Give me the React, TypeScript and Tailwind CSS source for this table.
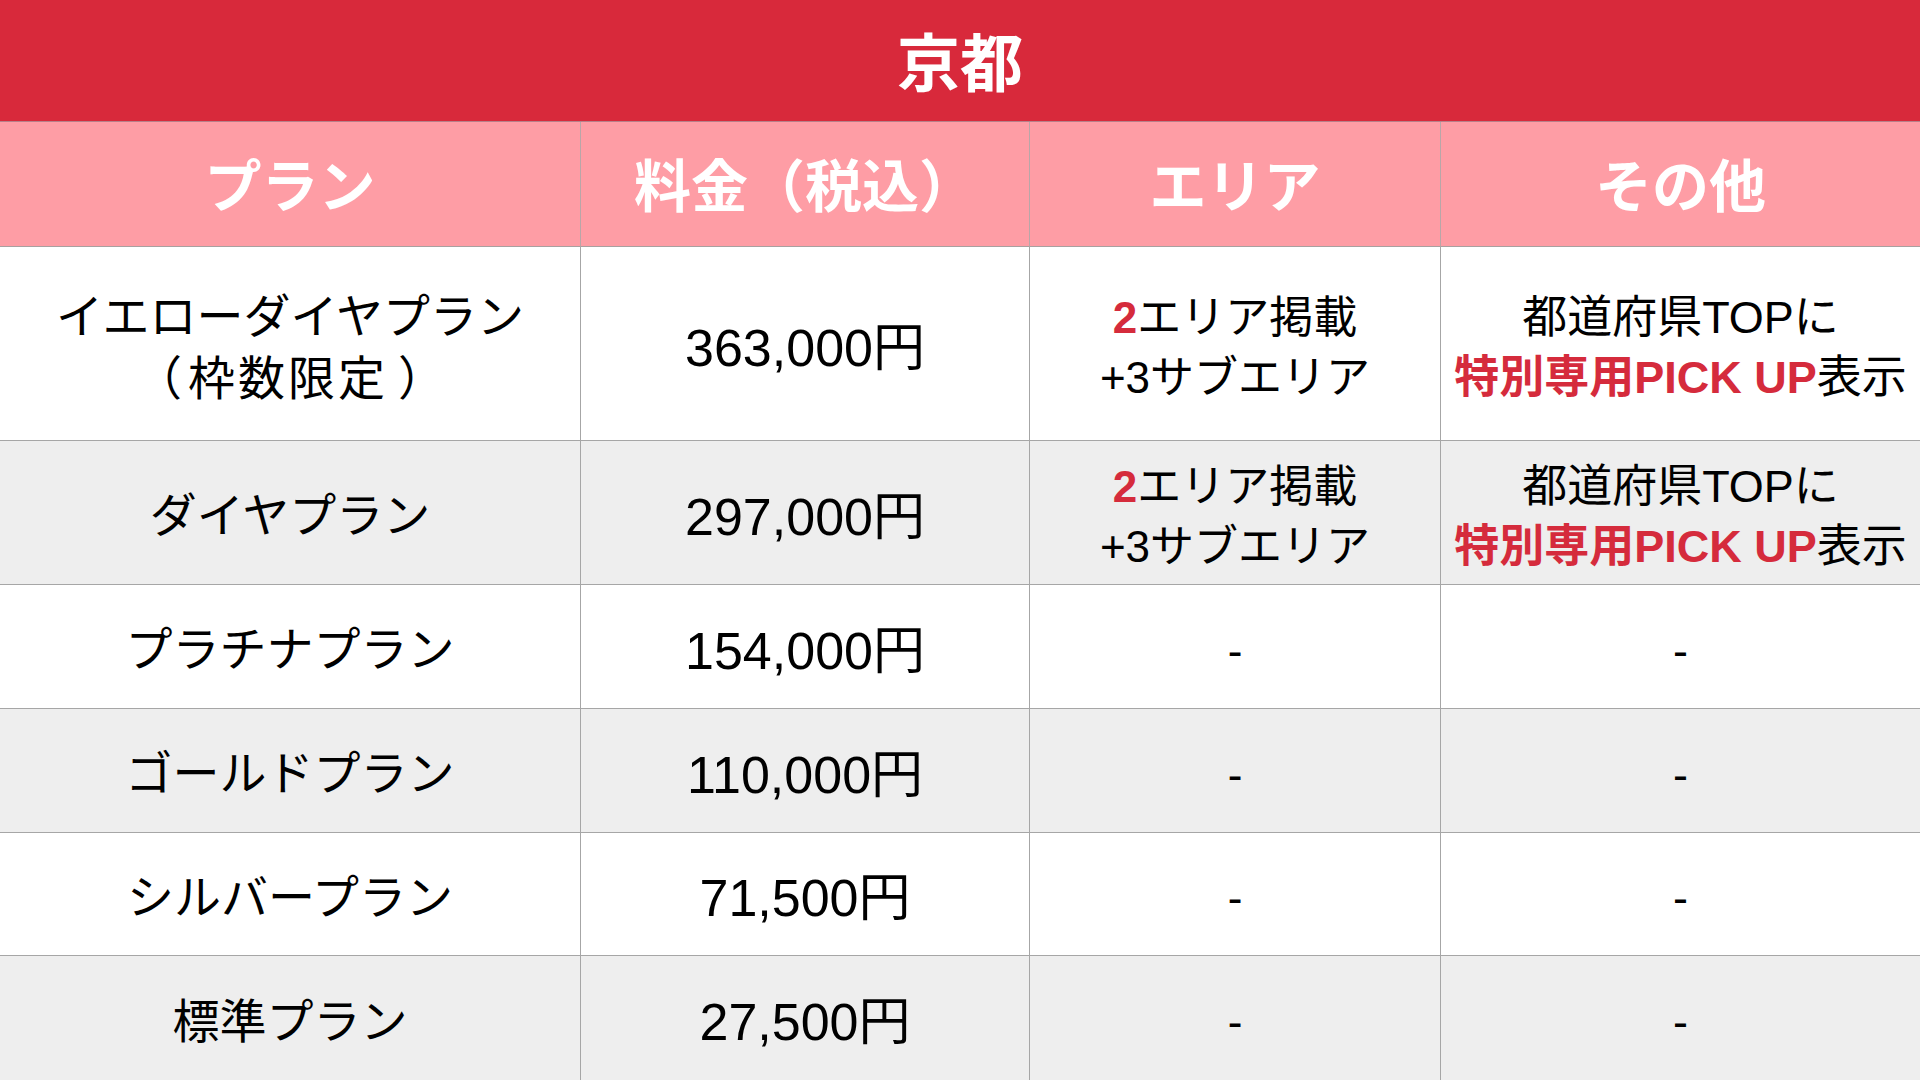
import React from "react";

type Row = {
  plan: React.ReactNode;
  price: string;
  area: React.ReactNode;
  other: React.ReactNode;
  h: string;
  bg: string;
};

const font = "font-['Liberation_Sans','Noto_Sans_CJK_JP',sans-serif]";

const AreaText = () => (
  <div className="leading-[60px]">
    <div>
      <span className="font-bold text-[#d52b3c]">2</span>エリア掲載
    </div>
    <div>+3サブエリア</div>
  </div>
);

const OtherText = () => (
  <div className="leading-[60px]">
    <div>都道府県TOPに</div>
    <div>
      <span className="font-bold text-[#d52b3c]">特別専用PICK UP</span>表示
    </div>
  </div>
);

const rows: Row[] = [
  {
    plan: (
      <div className="leading-[62px]">
        <div>イエローダイヤプラン</div>
        <div>
          <span className="inline-block w-[1em] mr-[6px] text-right">（</span>
          <span className="tracking-[3px]">枠数限定</span>
          <span className="inline-block w-[1em] ml-[10px] text-left">）</span>
        </div>
      </div>
    ),
    price: "363,000円",
    area: <AreaText />,
    other: <OtherText />,
    h: "h-[194px]",
    bg: "bg-white",
  },
  {
    plan: "ダイヤプラン",
    price: "297,000円",
    area: <AreaText />,
    other: <OtherText />,
    h: "h-[144px]",
    bg: "bg-[#eeeeee]",
  },
  { plan: "プラチナプラン", price: "154,000円", area: "-", other: "-", h: "h-[124px]", bg: "bg-white" },
  { plan: "ゴールドプラン", price: "110,000円", area: "-", other: "-", h: "h-[124px]", bg: "bg-[#eeeeee]" },
  { plan: "シルバープラン", price: "71,500円", area: "-", other: "-", h: "h-[123px]", bg: "bg-white" },
  { plan: "標準プラン", price: "27,500円", area: "-", other: "-", h: "h-[124px]", bg: "bg-[#eeeeee]" },
];

const headers = ["プラン", "料金（税込）", "エリア", "その他"];

export default function App() {
  return (
    <div className={`w-[1920px] h-[1080px] overflow-hidden text-black ${font}`}>
      <div className="h-[122px] pt-2 bg-[#d8293b] flex items-center justify-center text-white text-[63px] font-bold border-b border-[#b8808a]">
        京都
      </div>
      <div className="grid grid-cols-[581px_449px_411px_479px]">
        {headers.map((h, i) => (
          <div
            key={h}
            className={`h-[125px] pt-2 bg-[#fe9da5] flex items-center justify-center text-white text-[57px] font-bold border-b border-[#a8a0a0] ${
              i < 3 ? "border-r border-r-[#b8a6a8]" : ""
            }`}
          >
            {h}
          </div>
        ))}
        {rows.map((r, ri) => {
          const last = ri === rows.length - 1;
          const cell = `${r.h} ${r.bg} pt-2 flex items-center justify-center text-center ${
            last ? "" : "border-b border-[#a6a6a6]"
          }`;
          return (
            <React.Fragment key={ri}>
              <div className={`${cell} border-r border-r-[#a6a6a6] text-[47px]`}>{r.plan}</div>
              <div className={`${cell} border-r border-r-[#a6a6a6] text-[52px]`}>{r.price}</div>
              <div className={`${cell} border-r border-r-[#a6a6a6] text-[44px]`}>{r.area}</div>
              <div className={`${cell} text-[45px]`}>{r.other}</div>
            </React.Fragment>
          );
        })}
      </div>
    </div>
  );
}
